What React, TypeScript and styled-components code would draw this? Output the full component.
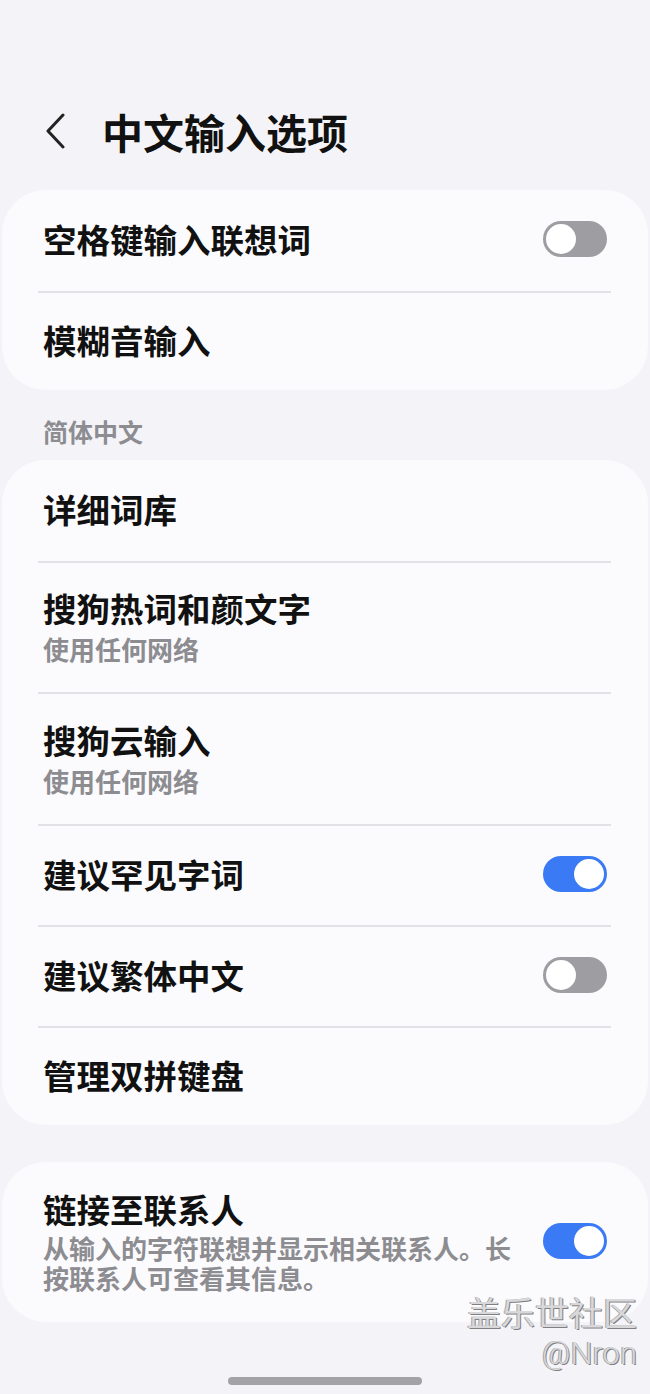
import React from "react";
import styled, { createGlobalStyle } from "styled-components";

const Global = createGlobalStyle`
  html, body { margin: 0; padding: 0; background: #f4f4f8; }
  body { font-family: "Noto Sans CJK SC", "Noto Sans", sans-serif; }
  * { box-sizing: border-box; }
`;

const Page = styled.div`
  position: relative;
  width: 650px;
  height: 1394px;
  background: #f4f4f8;
  overflow: hidden;
`;

const Header = styled.div`
  display: flex;
  align-items: center;
  height: 48px;
  margin: 107px 0 35px;
  padding-left: 44px;
  gap: 34px;
`;

const BackBtn = styled.svg`
  width: 24px;
  height: 36px;
  flex: none;
`;

const Title = styled.h1`
  margin: 0;
  font-size: 41px;
  line-height: 48px;
  font-weight: 700;
  color: #111;
`;

const Card = styled.div<{ $mt?: number }>`
  margin: ${(p) => p.$mt ?? 0}px 2px 0;
  background: #fbfbfd;
  border-radius: 44px;
  display: flex;
  flex-direction: column;
`;

const Divider = styled.div`
  height: 2px;
  margin: 0 37px 0 36px;
  background: #e2e2e6;
`;

const Row = styled.div<{ $h: number }>`
  display: flex;
  align-items: center;
  min-height: ${(p) => p.$h}px;
  padding: 0 41px 0 41px;
  gap: 20px;
`;

const TextCol = styled.div`
  flex: 1;
  display: flex;
  flex-direction: column;
  margin-top: -3px;
`;

const RowTitle = styled.div`
  font-size: 33.5px;
  line-height: 40px;
  font-weight: 700;
  color: #111;
`;

const RowSub = styled.div<{ $mt?: number }>`
  margin-top: ${(p) => p.$mt ?? 6}px;
  font-size: 26px;
  line-height: 30px;
  font-weight: 700;
  color: #8c8c91;
`;

const SectionLabel = styled.div`
  padding: 28px 43px 16px;
  font-size: 25px;
  line-height: 26px;
  font-weight: 700;
  color: #8c8c91;
`;

const Track = styled.div<{ $on: boolean }>`
  flex: none;
  width: 64px;
  height: 36px;
  margin-top: -3px;
  border-radius: 18px;
  background: ${(p) => (p.$on ? "#3a7af4" : "#9d9da2")};
  display: flex;
  align-items: center;
  justify-content: ${(p) => (p.$on ? "flex-end" : "flex-start")};
  padding: 0 3px;
`;

const Knob = styled.div`
  width: 30px;
  height: 30px;
  border-radius: 50%;
  background: #fff;
`;

const Toggle = ({ on }: { on: boolean }) => (
  <Track $on={on}>
    <Knob />
  </Track>
);

const HomeBar = styled.div`
  position: absolute;
  left: 228px;
  top: 1377px;
  width: 194px;
  height: 8px;
  border-radius: 4px;
  background: #a3a3a6;
`;

const Watermark = styled.div`
  position: absolute;
  right: 13px;
  top: 1290px;
  display: flex;
  flex-direction: column;
  align-items: flex-end;
  color: #d8d8da;
  text-shadow: 1px 1px 0 #808082, -1px 0 0 #a4a4a6;
`;

const WmMain = styled.div`
  font-size: 34px;
  line-height: 44px;
  font-weight: 400;
`;

const WmSub = styled.div`
  font-family: Roboto, "Liberation Sans", sans-serif;
  font-weight: 300;
  font-size: 31px;
  line-height: 40px;
`;

type Item = { title: string; sub?: string; toggle?: boolean; h: number };

const group2: Item[] = [
  { title: "详细词库", h: 101 },
  { title: "搜狗热词和颜文字", sub: "使用任何网络", h: 129 },
  { title: "搜狗云输入", sub: "使用任何网络", h: 130 },
  { title: "建议罕见字词", toggle: true, h: 99 },
  { title: "建议繁体中文", toggle: false, h: 99 },
  { title: "管理双拼键盘", h: 97 },
];

const renderRows = (items: Item[]) =>
  items.map((it, i) => (
    <React.Fragment key={it.title}>
      {i > 0 && <Divider />}
      <Row $h={it.h}>
        <TextCol>
          <RowTitle>{it.title}</RowTitle>
          {it.sub && <RowSub>{it.sub}</RowSub>}
        </TextCol>
        {it.toggle !== undefined && <Toggle on={it.toggle} />}
      </Row>
    </React.Fragment>
  ));

export default function App() {
  return (
    <Page>
      <Global />
      <Header>
        <BackBtn viewBox="0 0 24 36">
          <path d="M19 2 L4 18 L19 34" fill="none" stroke="#222" strokeWidth="3" strokeLinecap="round" strokeLinejoin="round" />
        </BackBtn>
        <Title>中文输入选项</Title>
      </Header>
      <Card>
        {renderRows([
          { title: "空格键输入联想词", toggle: false, h: 101 },
          { title: "模糊音输入", h: 97 },
        ])}
      </Card>
      <SectionLabel>简体中文</SectionLabel>
      <Card>{renderRows(group2)}</Card>
      <Card $mt={37}>
        <Row $h={160}>
          <TextCol>
            <RowTitle>链接至联系人</RowTitle>
            <RowSub $mt={4}>从输入的字符联想并显示相关联系人。长按联系人可查看其信息。</RowSub>
          </TextCol>
          <Toggle on={true} />
        </Row>
      </Card>
      <Watermark>
        <WmMain>盖乐世社区</WmMain>
        <WmSub>@Nron</WmSub>
      </Watermark>
      <HomeBar />
    </Page>
  );
}
